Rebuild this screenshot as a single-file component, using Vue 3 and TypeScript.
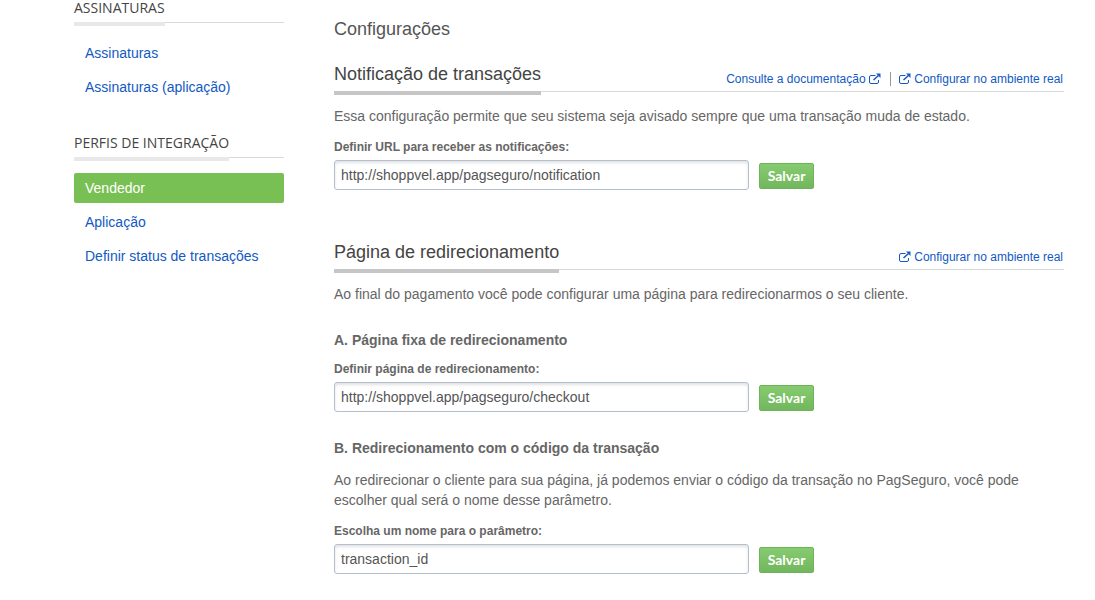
<script setup lang="ts">
import { ref } from 'vue'

interface MenuItem {
  label: string
  active?: boolean
}

interface MenuGroup {
  title: string
  items: MenuItem[]
}

const groups: MenuGroup[] = [
  {
    title: 'ASSINATURAS',
    items: [{ label: 'Assinaturas' }, { label: 'Assinaturas (aplicação)' }],
  },
  {
    title: 'PERFIS DE INTEGRAÇÃO',
    items: [
      { label: 'Vendedor', active: true },
      { label: 'Aplicação' },
      { label: 'Definir status de transações' },
    ],
  },
]

const notificationUrl = ref('http://shoppvel.app/pagseguro/notification')
const redirectUrl = ref('http://shoppvel.app/pagseguro/checkout')
const parameterName = ref('transaction_id')
</script>

<template>
  <svg class="symbols" aria-hidden="true">
    <symbol id="external" viewBox="0 0 12 12">
      <path d="M6.500 2.500H2A1.500 1.500 0 0 0 .5 4v5A1.500 1.500 0 0 0 2 10.500h6A1.500 1.500 0 0 0 9.500 9V7" fill="none" stroke="currentColor" stroke-width="1" />
      <path d="M4.500 7L9.500 2.500" fill="none" stroke="currentColor" stroke-width="1.500" />
      <path d="M7 .5h4.500v4.500z" fill="currentColor" />
    </symbol>
  </svg>
  <div class="page">
    <nav class="sidebar">
      <section v-for="group in groups" :key="group.title" class="group">
        <h2 class="group-title"><span>{{ group.title }}</span></h2>
        <ul class="menu">
          <li v-for="item in group.items" :key="item.label">
            <a href="#" class="menu-link" :class="{ active: item.active }">{{ item.label }}</a>
          </li>
        </ul>
      </section>
    </nav>

    <main class="content">
      <h1 class="page-title">Configurações</h1>

      <section class="block">
        <header class="block-header">
          <h2 class="block-title">Notificação de transações</h2>
          <div class="links">
            <a href="#">Consulte a documentação <svg class="icon"><use href="#external" /></svg></a>
            <a href="#" class="divided"><svg class="icon"><use href="#external" /></svg> Configurar no ambiente real</a>
          </div>
        </header>
        <p class="intro">Essa configuração permite que seu sistema seja avisado sempre que uma transação muda de estado.</p>
        <form class="field" @submit.prevent>
          <label for="notification">Definir URL para receber as notificações:</label>
          <div class="row">
            <input id="notification" v-model="notificationUrl" type="text" />
            <button type="submit">Salvar</button>
          </div>
        </form>
      </section>

      <section class="block">
        <header class="block-header">
          <h2 class="block-title">Página de redirecionamento</h2>
          <div class="links">
            <a href="#"><svg class="icon"><use href="#external" /></svg> Configurar no ambiente real</a>
          </div>
        </header>
        <p class="intro">Ao final do pagamento você pode configurar uma página para redirecionarmos o seu cliente.</p>

        <h3>A. Página fixa de redirecionamento</h3>
        <form class="field" @submit.prevent>
          <label for="redirect">Definir página de redirecionamento:</label>
          <div class="row">
            <input id="redirect" v-model="redirectUrl" type="text" />
            <button type="submit">Salvar</button>
          </div>
        </form>

        <h3>B. Redirecionamento com o código da transação</h3>
        <p class="detail">Ao redirecionar o cliente para sua página, já podemos enviar o código da transação no PagSeguro, você pode escolher qual será o nome desse parâmetro.</p>
        <form class="field" @submit.prevent>
          <label for="parameter">Escolha um nome para o parâmetro:</label>
          <div class="row">
            <input id="parameter" v-model="parameterName" type="text" />
            <button type="submit">Salvar</button>
          </div>
        </form>
      </section>
    </main>
  </div>
</template>

<style>
body {
  background: #fff;
}
</style>

<style scoped>
.symbols {
  position: absolute;
  width: 0;
  height: 0;
}

.page {
  display: flex;
  gap: 50px;
  padding: 0 31px 0 74px;
  font: 14px/20px "Liberation Sans", Arial, sans-serif;
  color: #666;
}

h1,
h2,
h3,
p,
ul {
  margin: 0;
  padding: 0;
}

a {
  color: #1259c3;
  text-decoration: none;
}

.sidebar {
  flex: 0 0 210px;
}

.group + .group {
  margin-top: 33px;
}

.group-title {
  height: 22px;
  border-bottom: 1px solid #d9d9d9;
  font: 14px/16px "Open Sans", sans-serif;
  color: #444;
}

.group-title span {
  display: inline-block;
  padding-bottom: 6px;
  border-bottom: 4px solid #e8e8e8;
}

.menu {
  display: grid;
  gap: 4px;
  margin-top: 15px;
  list-style: none;
}

.menu-link {
  display: block;
  padding: 5px 11px;
  border-radius: 2px;
}

.menu-link.active {
  background: #79c054;
  color: #fff;
}

.content {
  flex: 1;
  min-width: 0;
  padding: 18px 0 26px;
}

.page-title {
  font-size: 18px;
  line-height: 22px;
  font-weight: normal;
  color: #555;
}

.block {
  margin-top: 22px;
}

.block + .block {
  margin-top: 50px;
}

.block-header {
  display: flex;
  justify-content: space-between;
  align-items: flex-start;
  height: 29px;
  border-bottom: 1px solid #d9d9d9;
}

.block-title {
  padding-bottom: 5px;
  border-bottom: 4px solid #c6c6c6;
  font-size: 18px;
  line-height: 24px;
  font-weight: normal;
  color: #444;
}

.links {
  display: flex;
  align-items: center;
  padding: 10px 1px 0 0;
  font-size: 12px;
  line-height: 14px;
}

.divided {
  margin-left: 9px;
  padding-left: 8px;
  border-left: 1px solid #999;
}

.icon {
  width: 12px;
  height: 12px;
  vertical-align: -2px;
}

.intro {
  margin-top: 14px;
}

h3 {
  margin-top: 26px;
  font-size: 14px;
  line-height: 20px;
}

.detail {
  margin-top: 12px;
}

.field {
  margin-top: 13px;
}

h3 + .field {
  margin-top: 11px;
}

label {
  display: block;
  margin-bottom: 5px;
  font-size: 12px;
  line-height: 16px;
  font-weight: bold;
}

.row {
  display: flex;
  align-items: center;
  gap: 10px;
}

input {
  box-sizing: border-box;
  flex: 0 1 415px;
  min-width: 0;
  height: 30px;
  padding: 0 6px;
  border: 1px solid #b4bfd0;
  border-radius: 3px;
  background: #fff;
  box-shadow: inset 0 2px 3px #e2e2e2;
  font: inherit;
  color: #555;
}

button {
  box-sizing: border-box;
  flex: none;
  width: 55px;
  height: 26px;
  margin-top: 2px;
  padding: 0;
  border: 1px solid #6bb558;
  border-radius: 2px;
  background: linear-gradient(#87cb70, #72b75d);
  font: bold 14px/20px Lato, "Open Sans", sans-serif;
  color: #fff;
}
</style>
